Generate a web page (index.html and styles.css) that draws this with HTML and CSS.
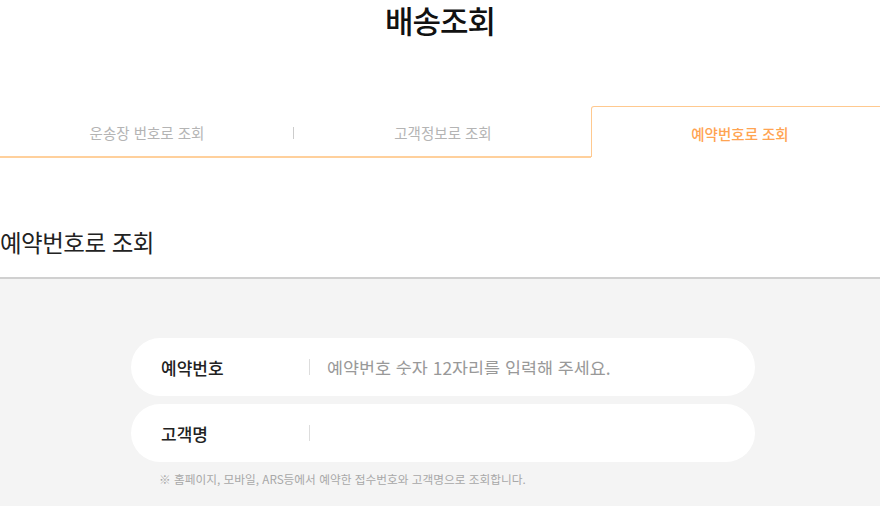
FILE: index.html
```html
<!DOCTYPE html>
<html lang="ko">
<head>
    <meta charset="UTF-8">
    <meta name="viewport" content="width=device-width, initial-scale=1.0">
    <title>배송조회</title>
    <link rel="stylesheet" href="styles.css">
</head>
<body>
    <div class="page">
        <h1 class="page-title">배송조회</h1>

        <!-- tabs -->
        <ul class="tabs">
            <li class="tab"><a href="#">운송장 번호로 조회</a></li>
            <li class="tab"><a href="#">고객정보로 조회</a></li>
            <li class="tab active"><a href="#">예약번호로 조회</a></li>
        </ul>

        <h2 class="section-title">예약번호로 조회</h2>

        <div class="search-box">
            <div class="input-row">
                <label for="rsv-no">예약번호</label>
                <input type="text" id="rsv-no" placeholder="예약번호 숫자 12자리를 입력해 주세요.">
            </div>
            <div class="input-row">
                <label for="cust-name">고객명</label>
                <input type="text" id="cust-name">
            </div>
            <p class="note">※ 홈페이지, 모바일, ARS등에서 예약한 접수번호와 고객명으로 조회합니다.</p>
        </div>
    </div>
</body>
</html>
```

FILE: styles.css
```css
body {
    margin: 0;
    font-family: "Noto Sans CJK KR", "Noto Sans", sans-serif;
    background-color: #fff;
    color: #222;
    overflow: hidden;
}

.page {
    width: 880px;
}

.page-title {
    margin: 0;
    height: 40px;
    line-height: 40px;
    font-size: 31px;
    font-weight: 500;
    text-align: center;
    color: #111;
    letter-spacing: -1px;
}

.tabs {
    display: flex;
    list-style: none;
    margin: 67px 0 0 -1px;
    padding: 0;
    width: 890px;
}

.tab {
    width: 296px;
    height: 49px;
    border-bottom: 2px solid #ffd09c;
    display: flex;
    align-items: center;
    justify-content: center;
    position: relative;
}

.tab a {
    text-decoration: none;
    color: #b4b4b4;
    font-size: 14.5px;
    padding-top: 2px;
}

.tab:first-child::after {
    content: "";
    position: absolute;
    right: 1px;
    top: 20px;
    width: 1px;
    height: 12px;
    background-color: #ccc;
}

.tab.active {
    border: 1px solid #ffc98f;
    border-bottom: none;
    border-top-left-radius: 3px;
    height: 50px;
    margin-top: -1px;
}

.tab.active a {
    color: #ffa452;
    font-weight: 500;
}

.section-title {
    margin: 0;
    padding: 67px 0 0;
    height: 52px;
    font-size: 23.5px;
    font-weight: 400;
    color: #222;
    letter-spacing: -0.5px;
    border-bottom: 2px solid #d0d0d0;
}

.search-box {
    background-color: #f4f4f4;
    padding: 59px 125px 40px 131px;
}

.input-row {
    display: flex;
    align-items: center;
    height: 58px;
    background-color: #fff;
    border-radius: 29px;
    margin-bottom: 8px;
    padding-left: 30px;
}

.input-row label {
    width: 148px;
    font-size: 17px;
    font-weight: 500;
    color: #222;
}

.input-row input {
    flex: 1;
    border: none;
    border-left: 1px solid #ddd;
    outline: none;
    height: 16px;
    padding: 0 0 0 17px;
    font-family: inherit;
    font-size: 17.4px;
    color: #333;
    background: transparent;
}

.input-row input::placeholder {
    color: #999;
}

.note {
    margin: 8px 0 0 28px;
    font-size: 11.7px;
    color: #a8a8a8;
}
```
